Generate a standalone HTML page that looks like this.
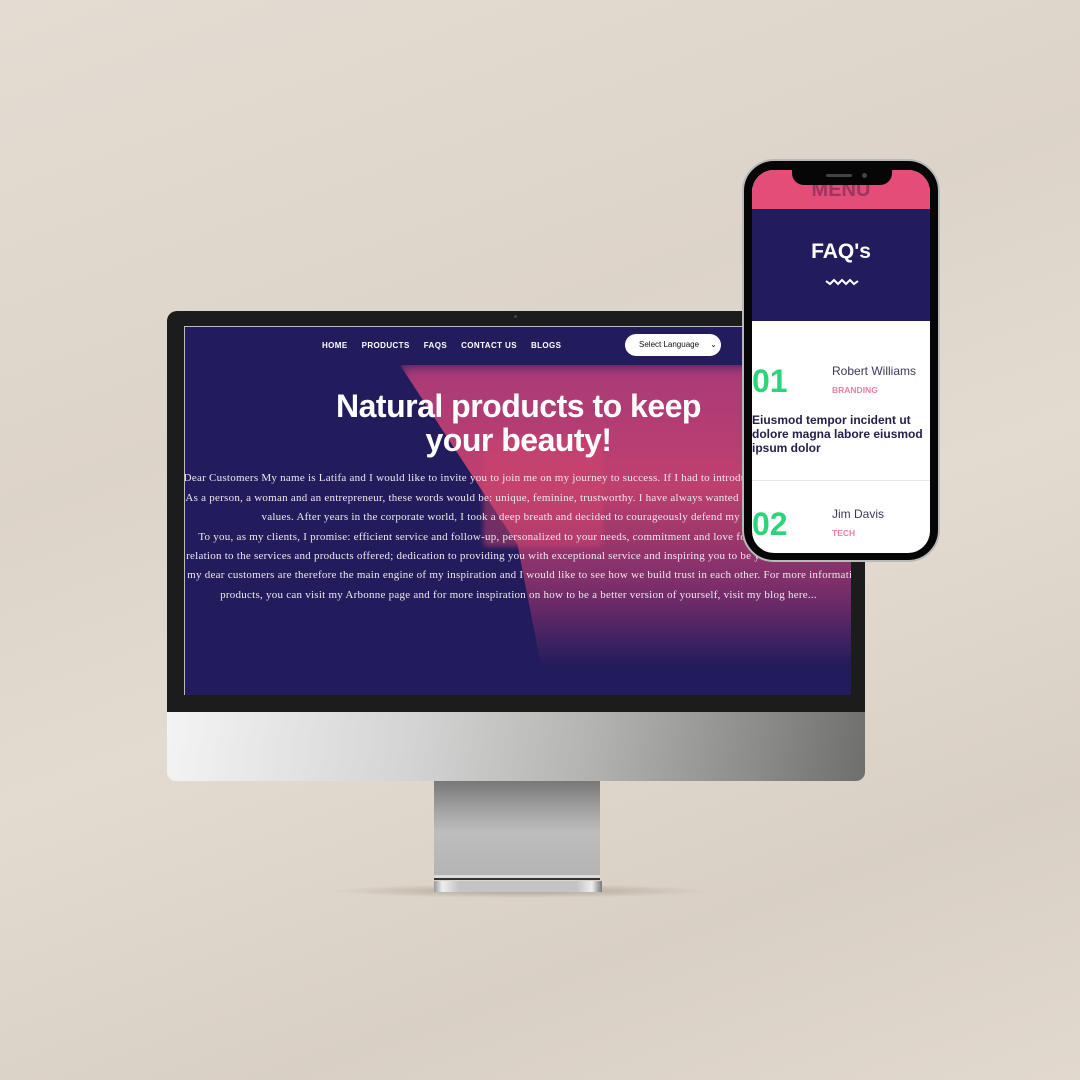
<!DOCTYPE html>
<html><head><meta charset="utf-8"><style>
*{margin:0;padding:0;box-sizing:border-box}
body{width:1080px;height:1080px;overflow:hidden;position:relative;background:linear-gradient(160deg,#e4dcd2 0%,#ddd4c9 35%,#e3dbd0 55%,#d9d0c5 80%,#e2d9ce 100%);font-family:"Liberation Sans",sans-serif}
.abs{position:absolute}
.bezel{left:167px;top:311px;width:698px;height:402px;background:#1c1c1c;border-radius:10px 10px 0 0}
.chin{left:167px;top:712px;width:698px;height:69px;background:linear-gradient(100deg,#f4f4f4 0%,#d4d4d4 35%,#b4b4b2 60%,#8a8a88 85%,#6e6e6c 100%);border-radius:0 0 9px 9px}
.stand{left:434px;top:781px;width:166px;height:94px;background:linear-gradient(180deg,#787878 0%,#a8a8a8 35%,#bdbdbd 55%,#b4b4b4 100%)}
.base1{left:434px;top:875px;width:166px;height:5px;background:#dcdcdc;border-bottom:2px solid #333}
.base2{left:434px;top:881px;width:168px;height:11px;background:linear-gradient(90deg,#999,#eee 5%,#c4c4c4 15%,#c4c4c4 85%,#eee 94%,#777);}
.shadow{left:330px;top:884px;width:380px;height:14px;background:radial-gradient(ellipse at center,rgba(90,75,60,.35),rgba(90,75,60,0) 70%)}
.screen{left:184px;top:326px;width:667px;height:369px;background:#231c5c;overflow:hidden;border-left:1px solid #bbb;border-top:1px solid #bbb}
.pink{left:215px;top:38px;width:470px;height:300px;background:linear-gradient(180deg,#a83a78 0%,#c0406e 40%,#7a2e6a 75%,rgba(35,28,92,0) 100%);clip-path:polygon(0 0,100% 0,100% 100%,30% 100%,25% 60%);filter:blur(6px)}
.pot{left:298px;top:110px;width:120px;height:110px;background:#d0466e;opacity:.45;border-radius:6px;filter:blur(2px)}
.nav{top:14px;left:137px;font-size:8px;font-weight:bold;color:#fff;letter-spacing:.4px;white-space:nowrap}
.nav span{margin-right:14px}
.sel{left:440px;top:7px;width:96px;height:22px;background:#fff;border-radius:11px;font-size:8px;color:#111;padding:6px 0 0 14px}
h1{position:absolute;left:0;width:667px;top:62px;text-align:center;color:#fff;font-size:32px;line-height:34px;font-weight:bold;letter-spacing:-.5px}
.p{position:absolute;left:-250px;width:1167px;text-align:center;white-space:nowrap;font-family:"Liberation Serif",serif;font-size:11px;color:#f0e8ee;letter-spacing:.25px}
.phone{left:742px;top:159px;width:198px;height:403px;background:#060606;border-radius:32px;border:2px solid #b9b9b9}
.pscreen{left:752px;top:170px;width:178px;height:383px;border-radius:22px;overflow:hidden;background:#fff}
.notch{left:792px;top:169px;width:100px;height:16px;background:#060606;border-radius:0 0 12px 12px}
</style></head><body>
<div class="abs shadow"></div>
<div class="abs stand"></div>
<div class="abs base1"></div>
<div class="abs base2"></div>
<div class="abs bezel"></div>
<div class="abs chin"></div>
<div class="abs" style="left:514px;top:315px;width:3px;height:3px;background:#444;border-radius:50%"></div>
<div class="abs screen">
  <div class="abs pink"></div>
  <div class="abs pot"></div>
  <div class="abs nav"><span>HOME</span><span>PRODUCTS</span><span>FAQS</span><span>CONTACT US</span><span>BLOGS</span></div>
  <div class="abs sel">Select Language &nbsp;&nbsp;&nbsp;&nbsp;⌄</div>
  <h1>Natural products to keep<br>your beauty!</h1>
  <div class="p" style="top:145px">My Dear Customers My name is Latifa and I would like to invite you to join me on my journey to success. If I had to introduce myself with three words</div>
  <div class="p" style="top:165px">As a person, a woman and an entrepreneur, these words would be: unique, feminine, trustworthy. I have always wanted to be part of a company</div>
  <div class="p" style="top:184px">values. After years in the corporate world, I took a deep breath and decided to courageously defend my values.</div>
  <div class="p" style="top:204px">To you, as my clients, I promise: efficient service and follow-up, personalized to your needs, commitment and love for what I do, honesty</div>
  <div class="p" style="top:223px">in relation to the services and products offered; dedication to providing you with exceptional service and inspiring you to be your best version every</div>
  <div class="p" style="top:242px">day. You, my dear customers are therefore the main engine of my inspiration and I would like to see how we build trust in each other. For more information on my</div>
  <div class="p" style="top:262px">products, you can visit my Arbonne page and for more inspiration on how to be a better version of yourself, visit my blog here...</div>
</div>
<div class="abs phone"></div>
<div class="abs pscreen">
  <div class="abs" style="left:0;top:0;width:178px;height:39px;background:#e44d78"></div>
  <div class="abs" style="left:0;top:9px;width:178px;text-align:center;font-size:20px;font-weight:bold;color:#9c3560">MENU</div>
  <div class="abs" style="left:0;top:39px;width:178px;height:112px;background:#231c5c"></div>
  <div class="abs" style="left:0;top:70px;width:178px;text-align:center;font-size:21px;font-weight:bold;color:#fff">FAQ's</div>
  <svg class="abs" style="left:73px;top:108px" width="34" height="8"><path d="M1 3 L5 6 L9 2 L13 6 L17 2 L21 6 L25 2 L29 6 L33 3" stroke="#fff" stroke-width="2" fill="none"/></svg>
  <div class="abs" style="left:0;top:193px;font-size:32px;font-weight:bold;color:#2ed47a">01</div>
  <div class="abs" style="left:80px;top:194px;font-size:12px;color:#3a3a5a">Robert Williams</div>
  <div class="abs" style="left:80px;top:215px;font-size:8.5px;font-weight:bold;color:#f07ea0">BRANDING</div>
  <div class="abs" style="left:0;top:243px;width:178px;font-size:12px;line-height:14px;font-weight:bold;color:#24204a">Eiusmod tempor incident ut dolore magna labore eiusmod ipsum dolor</div>
  <div class="abs" style="left:0;top:310px;width:178px;height:1px;background:#e8e8e8"></div>
  <div class="abs" style="left:0;top:336px;font-size:32px;font-weight:bold;color:#2ed47a">02</div>
  <div class="abs" style="left:80px;top:337px;font-size:12px;color:#3a3a5a">Jim Davis</div>
  <div class="abs" style="left:80px;top:358px;font-size:8.5px;font-weight:bold;color:#f07ea0">TECH</div>
</div>
<div class="abs notch"></div>
<div class="abs" style="left:826px;top:174px;width:26px;height:3px;background:#444;border-radius:2px"></div>
<div class="abs" style="left:862px;top:173px;width:5px;height:5px;background:#444;border-radius:50%"></div>
</body></html>
